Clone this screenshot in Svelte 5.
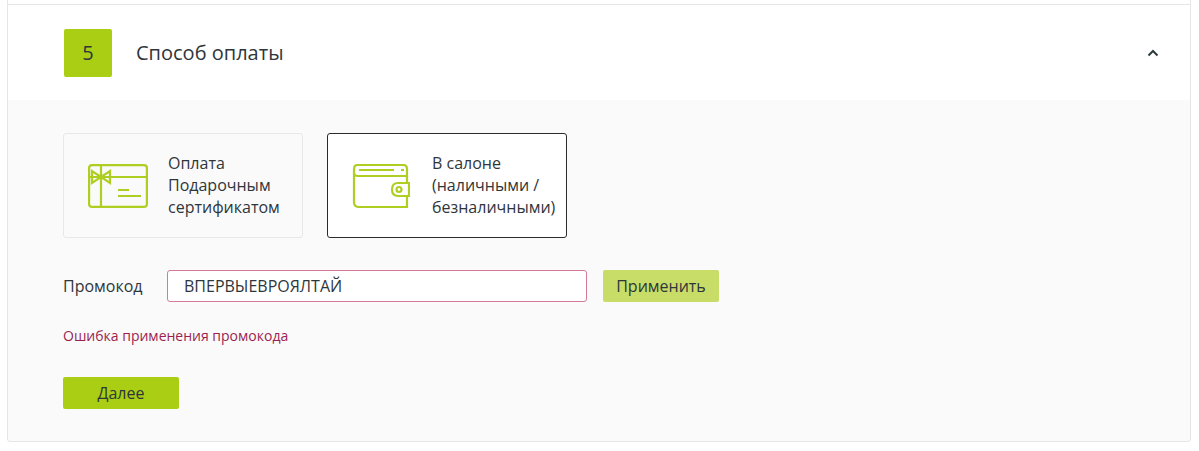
<script>
  const methods = [
    { id: 'gift', lines: ['Оплата', 'Подарочным', 'сертификатом'], active: false },
    { id: 'wallet', lines: ['В салоне', '(наличными /', 'безналичными)'], active: true }
  ];
</script>

<div class="page">
  <div class="prev"></div>
  <section class="card">
    <header class="head">
      <div class="step">5</div>
      <h2>Способ оплаты</h2>
      <svg class="chevron" width="12" height="8" viewBox="0 0 12 8" aria-hidden="true">
        <path d="M1.500 6.500 6 2l4.500 4.500" fill="none" stroke="#2f3a3f" stroke-width="2" />
      </svg>
    </header>
    <div class="body">
      <div class="methods">
        {#each methods as m}
          <div class="method" class:active={m.active}>
            <div class="icon">
              {#if m.id === 'gift'}
                <svg width="60" height="44" viewBox="0 0 60 44" fill="none" stroke="#aecf22" stroke-width="2.200" aria-hidden="true">
                  <rect x="1.100" y="1.100" width="57.800" height="41.800" rx="3" />
                  <path d="M1 13h58M13 1v42" />
                  <path d="M13 13 4 7v12zM13 13l9-6v12z" />
                  <path d="M30 26h11M30 32h23" />
                </svg>
              {:else}
                <svg width="58" height="44" viewBox="0 0 58 44" fill="none" stroke="#aecf22" stroke-width="2.200" aria-hidden="true">
                  <path d="M55 19V5Q55 1 51 1H6Q2 1 2 5V38Q2 43 7 43H55V32" />
                  <path d="M2 9Q2 12 6 12H55" />
                  <path d="M7 6h35" />
                  <path d="M49 6h3" />
                  <path d="M57 19H46Q40 19 40 25.500T46 32H57Z" />
                  <circle cx="47" cy="25.500" r="2.500" />
                </svg>
              {/if}
            </div>
            <div class="label">
              {#each m.lines as line}
                <div>{line}</div>
              {/each}
            </div>
          </div>
        {/each}
      </div>

      <div class="promo">
        <span class="promo-label">Промокод</span>
        <input class="promo-input" type="text" value="ВПЕРВЫЕВРОЯЛТАЙ" />
        <button class="btn apply">Применить</button>
      </div>
      <p class="error">Ошибка применения промокода</p>
      <button class="btn next">Далее</button>
    </div>
  </section>
</div>

<style>
  :global(body) {
    margin: 0;
    background: #fff;
  }
  .page {
    padding: 0 8px 9px 7px;
    font-family: "Open Sans", "Liberation Sans", sans-serif;
    color: #2f363b;
  }
  .prev {
    height: 4px;
    border: 1px solid #e6e6e6;
    border-width: 0 1px;
  }
  .card {
    border: 1px solid #e6e6e6;
    border-radius: 0 0 3px 3px;
    background: #fafafa;
  }
  .head {
    display: flex;
    align-items: center;
    height: 95px;
    padding: 0 32px 0 56px;
    background: #fff;
  }
  .step {
    display: flex;
    align-items: center;
    justify-content: center;
    width: 48px;
    height: 48px;
    border-radius: 2px;
    background: #a9ce14;
    font-size: 20px;
  }
  h2 {
    flex: 1;
    margin: 0 0 0 24px;
    font-size: 20px;
    font-weight: 400;
  }
  .chevron {
    margin-right: -1px;
  }
  .body {
    padding: 33px 55px 32px;
  }
  .methods {
    display: flex;
    gap: 24px;
  }
  .method {
    display: flex;
    align-items: center;
    box-sizing: border-box;
    width: 240px;
    height: 105px;
    border: 1px solid #e8e8e8;
    border-radius: 3px;
  }
  .method.active {
    border-color: #2b2b2b;
    background: #fff;
  }
  .icon {
    box-sizing: border-box;
    width: 104px;
    padding-left: 24px;
    flex: none;
  }
  .icon svg {
    display: block;
  }
  .label {
    margin-top: -2px;
    font-size: 16px;
    line-height: 22px;
    white-space: nowrap;
  }
  .promo {
    display: flex;
    align-items: center;
    margin-top: 32px;
  }
  .promo-label {
    width: 104px;
    font-size: 16px;
  }
  .promo-input {
    box-sizing: border-box;
    width: 420px;
    height: 32px;
    padding: 0 16px;
    border: 1px solid #d4799b;
    border-radius: 3px;
    outline: none;
    background: #fff;
    color: #2f363b;
    font: 400 16px "Open Sans", sans-serif;
  }
  .btn {
    box-sizing: border-box;
    width: 116px;
    height: 32px;
    border: 0;
    border-radius: 2px;
    color: #2f363b;
    font: 400 16px "Open Sans", sans-serif;
    padding: 0;
  }
  .apply {
    margin-left: 16px;
    background: #c8dc68;
  }
  .next {
    display: block;
    background: #a9ce14;
  }
  .error {
    margin: 24px 0 32px;
    color: #9b1f50;
    font-size: 14px;
    line-height: 19px;
  }
</style>
